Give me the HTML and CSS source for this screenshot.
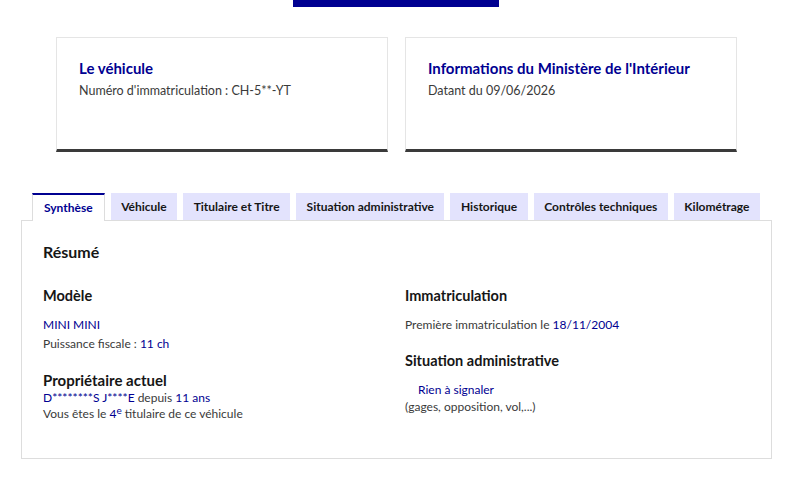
FILE: index.html
```html
<!DOCTYPE html>
<html lang="fr">
<head>
<meta charset="utf-8">
<title>Historique du véhicule</title>
<link rel="stylesheet" href="styles.css">
</head>
<body>
<div class="page">
  <div class="topbar"></div>

  <div class="cards">
    <div class="card">
      <h2 class="card-title">Le véhicule</h2>
      <p class="card-text">Numéro d'immatriculation : CH-5**-YT</p>
    </div>
    <div class="card">
      <h2 class="card-title">Informations du Ministère de l'Intérieur</h2>
      <p class="card-text">Datant du 09/06/2026</p>
    </div>
  </div>

  <ul class="tabs">
    <li class="tab tab-active">Synthèse</li>
    <li class="tab">Véhicule</li>
    <li class="tab">Titulaire et Titre</li>
    <li class="tab">Situation administrative</li>
    <li class="tab">Historique</li>
    <li class="tab">Contrôles techniques</li>
    <li class="tab">Kilométrage</li>
  </ul>

  <div class="panel">
    <h3 class="panel-title">Résumé</h3>
    <div class="cols">
      <div class="col">
        <h4 class="sec-title">Modèle</h4>
        <p class="line line-first"><span class="val">MINI MINI</span></p>
        <p class="line">Puissance fiscale : <span class="val">11 ch</span></p>
        <h4 class="sec-title sec-owner">Propriétaire actuel</h4>
        <p class="line tight"><span class="val">D********S J****E</span> depuis <span class="val">11 ans</span></p>
        <p class="line tight">Vous êtes le <span class="val">4<sup>e</sup></span> titulaire de ce véhicule</p>
      </div>
      <div class="col">
        <h4 class="sec-title">Immatriculation</h4>
        <p class="line line-first">Première immatriculation le <span class="val">18/11/2004</span></p>
        <h4 class="sec-title sec-admin">Situation administrative</h4>
        <p class="line status"><span class="val">Rien à signaler</span></p>
        <p class="line tight">(gages, opposition, vol,...)</p>
      </div>
    </div>
  </div>
</div>
</body>
</html>
```

FILE: styles.css
```css
* { box-sizing: border-box; }

body {
  margin: 0;
  background: #fff;
  font-family: Lato, "Noto Sans", sans-serif;
  color: #3a3a3a;
}

h2, h3, h4, p, ul { margin: 0; padding: 0; }

.page {
  width: 751px;
  margin-left: 21px;
}

.topbar {
  width: 206px;
  height: 7px;
  margin-left: 272px;
  background: #000091;
}

.cards {
  display: flex;
  gap: 17px;
  padding: 0 35px;
  margin-top: 30px;
}

.card {
  flex: 1;
  height: 115px;
  border: 1px solid #e5e5e5;
  border-bottom: 3px solid #3a3a3a;
  padding: 20px 22px 0;
}

.card-title {
  font-size: 15px;
  line-height: 20px;
  font-weight: 700;
  color: #000091;
}

.card-text {
  margin-top: 4px;
  font-size: 12.5px;
  line-height: 18px;
  color: #3a3a3a;
}

.tabs {
  list-style: none;
  display: flex;
  gap: 6px;
  padding-left: 11px;
  margin-top: 41px;
  position: relative;
  z-index: 1;
}

.tab {
  height: 27px;
  padding: 0 10.5px;
  background: #e3e3fd;
  font-size: 12px;
  font-weight: 700;
  line-height: 28px;
  color: #161616;
  white-space: nowrap;
}

.tab-active {
  height: 28px;
  margin-bottom: -1px;
  background: #fff;
  color: #000091;
  border-top: 2px solid #000091;
  border-left: 1px solid #ddd;
  border-right: 1px solid #ddd;
  line-height: 26px;
  padding: 0 11px;
}

.panel {
  border: 1px solid #ddd;
  padding: 19px 21px 36px;
}

.panel-title {
  font-size: 16px;
  line-height: 24px;
  font-weight: 700;
  color: #161616;
}

.cols {
  display: grid;
  grid-template-columns: 1fr 1fr;
  column-gap: 17px;
  margin-top: 22px;
}

.sec-title {
  font-size: 14.5px;
  line-height: 20px;
  font-weight: 700;
  color: #161616;
}

.sec-owner { margin-top: 17px; font-size: 15px; }
.sec-admin { margin-top: 17px; }

.line {
  font-size: 12px;
  line-height: 19px;
  color: #3a3a3a;
}

.line-first { margin-top: 9px; }

.tight { line-height: 16px; }

.status {
  margin-top: 10px;
  padding-left: 13px;
  line-height: 18px;
}

.val { color: #000091; }

sup {
  font-size: 10px;
  line-height: 0;
  vertical-align: 4px;
}
```
